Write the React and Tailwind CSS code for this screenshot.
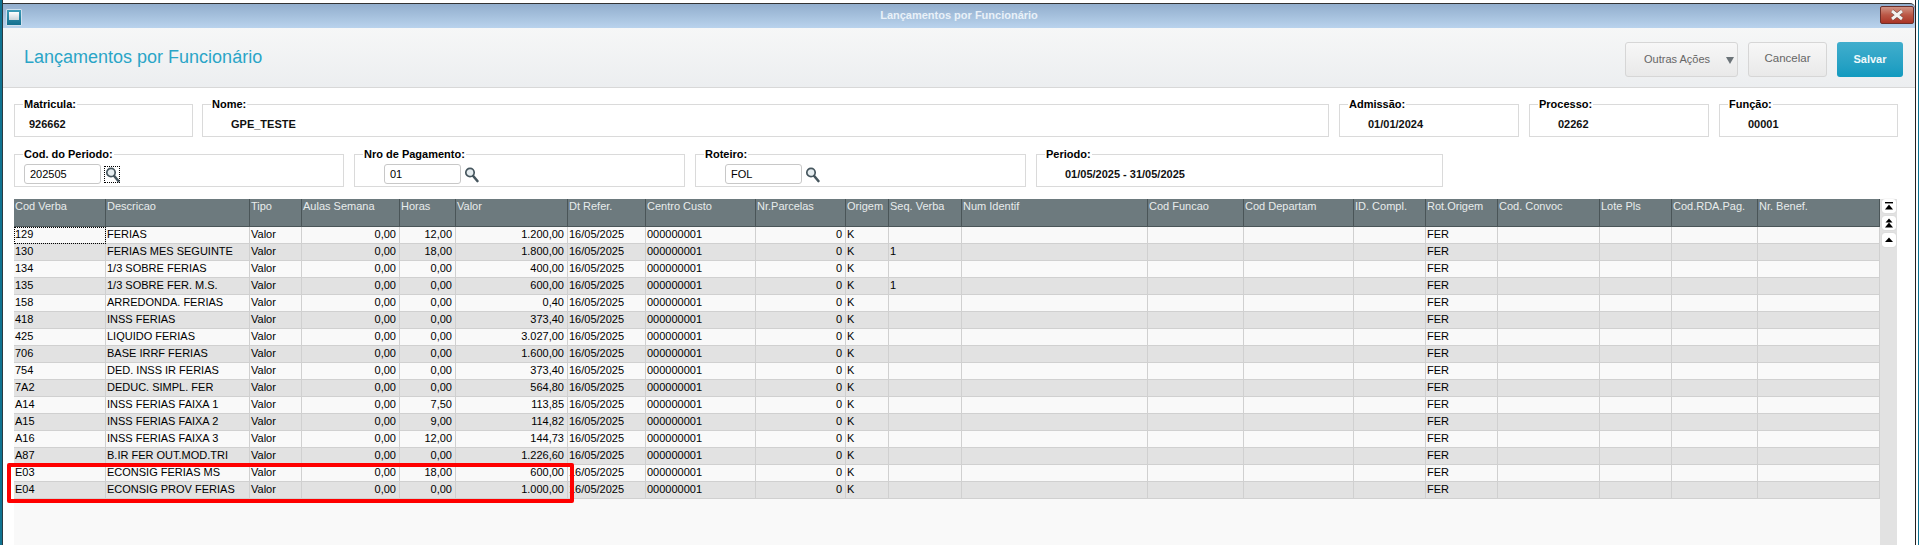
const COL_WIDTHS = [92, 144, 52, 98, 56, 112, 78, 110, 90, 43, 73, 186, 96, 110, 72, 72, 102, 72, 86, 122];

const HEADERS = [
  "Cod Verba", "Descricao", "Tipo", "Aulas Semana", "Horas", "Valor", "Dt Refer.", "Centro Custo",
  "Nr.Parcelas", "Origem", "Seq. Verba", "Num Identif", "Cod Funcao", "Cod Departam", "ID. Compl.",
  "Rot.Origem", "Cod. Convoc", "Lote Pls", "Cod.RDA.Pag.", "Nr. Benef.",
];

const ROWS = [
  ["129", "FERIAS", "12,00", "1.200,00", ""],
  ["130", "FERIAS MES SEGUINTE", "18,00", "1.800,00", "1"],
  ["134", "1/3 SOBRE FERIAS", "0,00", "400,00", ""],
  ["135", "1/3 SOBRE FER. M.S.", "0,00", "600,00", "1"],
  ["158", "ARREDONDA. FERIAS", "0,00", "0,40", ""],
  ["418", "INSS FERIAS", "0,00", "373,40", ""],
  ["425", "LIQUIDO FERIAS", "0,00", "3.027,00", ""],
  ["706", "BASE IRRF FERIAS", "0,00", "1.600,00", ""],
  ["754", "DED. INSS IR FERIAS", "0,00", "373,40", ""],
  ["7A2", "DEDUC. SIMPL. FER", "0,00", "564,80", ""],
  ["A14", "INSS FERIAS FAIXA 1", "7,50", "113,85", ""],
  ["A15", "INSS FERIAS FAIXA 2", "9,00", "114,82", ""],
  ["A16", "INSS FERIAS FAIXA 3", "12,00", "144,73", ""],
  ["A87", "B.IR FER OUT.MOD.TRI", "0,00", "1.226,60", ""],
  ["E03", "ECONSIG FERIAS MS", "18,00", "600,00", ""],
  ["E04", "ECONSIG PROV FERIAS", "0,00", "1.000,00", ""],
];

function SearchIcon() {
  return (
    <svg width="15" height="17" viewBox="0 0 15 17" className="shrink-0">
      <circle cx="6" cy="6.5" r="4.2" fill="#e6edf0" stroke="#46565e" strokeWidth="1.7" />
      <path d="M9.2 10 L13.4 15" stroke="#46565e" strokeWidth="2.6" strokeLinecap="round" />
    </svg>
  );
}

function Field({ label, value, width, indent = "pl-[28px]", className = "" }) {
  return (
    <fieldset className={`${width} ${className} h-[40px] shrink-0 border border-[#dadada]`}>
      <legend className="ml-[8px] px-[1px] text-[11px] leading-[14px] font-bold text-black">{label}</legend>
      <div className={`${indent} pt-[6px] text-[11px] leading-[14px] font-bold text-[#111111]`}>{value}</div>
    </fieldset>
  );
}

function LookupField({ label, value, width, indent = "ml-[29px]", focused }) {
  return (
    <fieldset className={`${width} h-[40px] shrink-0 border border-[#dadada]`}>
      <legend className="ml-[8px] px-[1px] text-[11px] leading-[14px] font-bold text-black">{label}</legend>
      <div className={`${indent} mt-[3px] flex items-center gap-[3px]`}>
        <div className="w-[77px] h-[20px] pl-[5px] rounded-[3px] border border-[#c8c8c8] bg-white text-[11px] leading-[18px] text-black">
          {value}
        </div>
        <div className={focused ? "flex items-center justify-center w-[16px] h-[17px] border border-dotted border-black" : "flex items-center w-[16px] h-[17px]"}>
          <SearchIcon />
        </div>
      </div>
    </fieldset>
  );
}

function ScrollButton({ children }) {
  return (
    <div className="w-[14px] h-[14px] rounded-[3px] bg-white shadow-[0_0_1px_#bbbbbb] flex items-center justify-center">
      <svg width="10" height="10" viewBox="0 0 10 10" fill="#000000">
        {children}
      </svg>
    </div>
  );
}

function DataRow({ row, index }) {
  const [code, desc, horas, valor, seq] = row;
  const cells = [code, desc, "Valor", "0,00", horas, valor, "16/05/2025", "000000001", "0", "K", seq, "", "", "", "", "FER", "", "", "", ""];
  const rightAligned = [3, 4, 5, 8];
  return (
    <tr className={index % 2 === 0 ? "bg-[#f9f9f9]" : "bg-[#e2e2e2]"}>
      {cells.map((cell, i) => (
        <td
          key={i}
          className={`h-[17px] p-0 align-top border-r border-b border-[#d0d0d0] text-[11px] leading-[15px] text-black overflow-hidden whitespace-nowrap ${
            rightAligned.includes(i) ? "text-right pr-[3px]" : "pl-[1px]"
          } ${index === 0 && i === 0 ? "outline-1 outline-dotted outline-black -outline-offset-1" : ""}`}
        >
          {cell}
        </td>
      ))}
    </tr>
  );
}

export default function App() {
  return (
    <div className="relative flex w-[1919px] h-[545px] overflow-hidden bg-white font-['Liberation_Sans',Arial,sans-serif]">
      <div className="w-[2px] bg-[#0f7391] shrink-0" />
      <div className="w-[1px] bg-[#2a3b42] shrink-0" />

      <div className="flex-1 min-w-0 flex flex-col pt-[3px]">
        {/* title bar */}
        <div className="relative h-[25px] shrink-0 flex items-center justify-center border-t border-[#333333] rounded-tr-[5px] bg-gradient-to-b from-[#92aecd] to-[#b9d3ed]">
          <div className="absolute left-[3px] top-[5px] w-[16px] h-[17px] rounded-[1px] border border-[#cfe0ee] bg-gradient-to-b from-[#3d9cb8] to-[#12708f] flex items-start justify-center pt-[2px]">
            <div className="w-[10px] h-[8px] bg-gradient-to-b from-[#ffffff] to-[#c9d4da]" />
          </div>
          <span className="text-[11px] font-bold text-[#e9f1f8] -mt-[2px]">Lançamentos por Funcionário</span>
          <div className="absolute right-[1px] top-[2px] w-[34px] h-[18px] rounded-[2px] border border-[#6d302b] bg-gradient-to-b from-[#cf9385] via-[#bb5746] to-[#a93426] flex items-center justify-center">
            <svg width="16" height="12" viewBox="0 0 16 12">
              <path d="M3 2 L13 10 M13 2 L3 10" stroke="#5f3b36" strokeWidth="4" />
              <path d="M3 2 L13 10 M13 2 L3 10" stroke="#f3f1ef" strokeWidth="3" />
            </svg>
          </div>
        </div>

        {/* header */}
        <div className="h-[60px] shrink-0 flex items-center justify-between pl-[21px] pr-[12px] border-b border-[#d8d8d8] bg-gradient-to-b from-[#f6f7f7] to-[#eceef0]">
          <h1 className="text-[18px] font-normal text-[#2aa5c7]">Lançamentos por Funcionário</h1>
          <div className="flex gap-[10px] mt-[3px]">
            <button className="relative w-[113px] h-[35px] rounded-[3px] border border-[#d6d6d6] bg-gradient-to-b from-[#f7f7f7] to-[#e9e9e9] text-[11px] text-[#666666] text-left pl-[18px]">
              Outras Ações
              <span className="absolute right-[3px] top-[14px] border-x-[4px] border-x-transparent border-t-[7px] border-t-[#6b7378]" />
            </button>
            <button className="w-[79px] h-[35px] rounded-[3px] border border-[#d6d6d6] bg-gradient-to-b from-[#f7f7f7] to-[#e9e9e9] text-[11.5px] text-[#666666]">
              Cancelar
            </button>
            <button className="w-[66px] h-[35px] rounded-[3px] bg-gradient-to-b from-[#40aecd] to-[#109abf] text-[11px] font-bold text-[#f2f9fb]">
              Salvar
            </button>
          </div>
        </div>

        {/* form and grid */}
        <div className="flex-1 min-h-0 flex flex-col pl-[11px] pt-[9px]">
          <div className="flex gap-[10px]">
            <Field label="Matricula:" value="926662" width="w-[179px]" className="-mr-[1px]" indent="pl-[14px]" />
            <Field label="Nome:" value="GPE_TESTE" width="w-[1127px]" />
            <Field label="Admissão:" value="01/01/2024" width="w-[180px]" />
            <Field label="Processo:" value="02262" width="w-[180px]" />
            <Field label="Função:" value="00001" width="w-[179px]" />
          </div>

          <div className="flex gap-[10px] mt-[10px]">
            <LookupField label="Cod. do Periodo:" value="202505" width="w-[330px]" indent="ml-[9px]" focused />
            <LookupField label="Nro de Pagamento:" value="01" width="w-[331px]" />
            <LookupField label="Roteiro:" value="FOL" width="w-[331px]" />
            <Field label="Periodo:" value="01/05/2025 - 31/05/2025" width="w-[407px]" />
          </div>

          <div className="flex-1 min-h-0 flex mt-[12px]">
            <div className="w-[1866px] shrink-0 bg-[#f9f9f9]">
              <table className="table-fixed w-[1866px] border-separate border-spacing-0">
                <colgroup>
                  {COL_WIDTHS.map((w, i) => (
                    <col key={i} style={{ width: w }} />
                  ))}
                </colgroup>
                <thead>
                  <tr>
                    {HEADERS.map((h) => (
                      <th
                        key={h}
                        className="h-[28px] p-0 pl-[1px] align-top text-left text-[11px] leading-[14px] font-normal text-[#e8ecec] bg-[#6d7a7e] border-r border-b border-[#4a5558] overflow-hidden whitespace-nowrap"
                      >
                        {h}
                      </th>
                    ))}
                  </tr>
                </thead>
                <tbody>
                  {ROWS.map((row, i) => (
                    <DataRow key={row[0]} row={row} index={i} />
                  ))}
                </tbody>
              </table>
            </div>

            <div className="w-[17px] shrink-0 bg-[#e2e2e2] pl-[2px] flex flex-col gap-[3px]">
              <ScrollButton>
                <rect x="1" y="1" width="8" height="1.4" />
                <path d="M5 3.5 L9 8.5 H1 Z" />
              </ScrollButton>
              <ScrollButton>
                <path d="M5 0.5 L8.5 4.5 H1.5 Z" />
                <path d="M5 4.5 L9 9.5 H1 Z" />
              </ScrollButton>
              <ScrollButton>
                <path d="M5 2.5 L9 7 H1 Z" />
              </ScrollButton>
            </div>
          </div>
        </div>
      </div>

      <div className="w-[1px] bg-[#222222] shrink-0" />
      <div className="w-[2px] bg-white shrink-0" />
      <div className="w-[1px] bg-[#0f7391] shrink-0" />

      {/* red highlight drawn over the grid */}
      <div className="absolute left-[7px] top-[463px] w-[567px] h-[40px] border-[4px] border-[#ff0000] rounded-[2px] pointer-events-none" />
    </div>
  );
}
